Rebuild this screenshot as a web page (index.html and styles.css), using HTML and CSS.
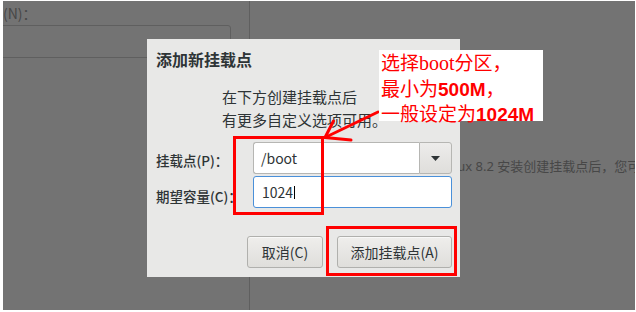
FILE: index.html
```html
<!DOCTYPE html>
<html lang="zh-CN">

<head>
    <meta charset="UTF-8">
    <title>添加新挂载点</title>
    <link rel="stylesheet" href="styles.css">
</head>

<body>
    <div class="page">
        <!-- dimmed installer window behind the dialog -->
        <div class="screen">
            <div class="left-pane">
                <div class="field-label">(N)：</div>
                <div class="name-box"></div>
            </div>
            <div class="right-pane">
                <p class="hint">Linux 8.2 安装创建挂载点后，您可在这里浏览它们的详细信息。</p>
            </div>
        </div>

        <div class="dialog">
            <h1 class="dialog-title">添加新挂载点</h1>
            <p class="dialog-desc">在下方创建挂载点后<br>有更多自定义选项可用。</p>
            <div class="form-grid">
                <label class="form-label label-mount">挂载点(P)：</label>
                <div class="combo">
                    <div class="combo-entry">/boot</div>
                    <div class="combo-button">
                        <svg width="9" height="5" viewBox="0 0 9 5">
                            <path d="M0 0 H9 L4.5 5 Z" fill="#2e3436" />
                        </svg>
                    </div>
                </div>
                <label class="form-label label-size">期望容量(C)：</label>
                <div class="entry">1024<span class="caret"></span></div>
            </div>
            <div class="dialog-actions">
                <button class="btn btn-cancel">取消(C)</button>
                <button class="btn btn-add">添加挂载点(A)</button>
            </div>
        </div>

        <!-- red annotations drawn on top of the screenshot -->
        <div class="mark mark-fields"></div>
        <div class="mark mark-button"></div>
        <svg class="arrow" width="636" height="312" viewBox="0 0 636 312">
            <g stroke="#ff0000" stroke-width="3" stroke-linecap="round" fill="none">
                <line x1="378" y1="112" x2="325" y2="137.5" />
                <line x1="325" y1="137.5" x2="333.5" y2="121" />
                <line x1="325" y1="137.5" x2="351" y2="140" />
            </g>
        </svg>
        <div class="note">
            <div>选择<span class="note-serif">boot</span>分区，</div>
            <div>最小为<b class="note-num">500M</b>，</div>
            <div>一般设定为<b class="note-num">1024M</b></div>
        </div>
    </div>
</body>

</html>
```

FILE: styles.css
```css
* {
    box-sizing: border-box;
    margin: 0;
    padding: 0;
}

body {
    background-color: #ffffff;
    font-family: "Noto Sans CJK SC", "Noto Sans", sans-serif;
    color: #2e3436;
}

.page {
    position: relative;
    width: 636px;
    height: 312px;
    overflow: hidden;
}

.screen {
    display: flex;
    height: 309px;
    margin: 1px 1px 2px 3px;
    background-color: #737373;
    color: #474747;
    font-size: 14px;
}

.left-pane {
    width: 247px;
    border-right: 1px solid #5f5f5f;
    overflow: hidden;
}

.field-label {
    line-height: 20px;
    padding-top: 2px;
}

.name-box {
    width: 234px;
    height: 33px;
    margin-top: 2px;
    margin-left: -6px;
    border: 1px solid #5f5f5f;
    border-radius: 3px;
}

.right-pane {
    flex: 1;
    overflow: hidden;
}

.hint {
    white-space: nowrap;
    font-family: "Noto Sans", "Noto Sans CJK SC", sans-serif;
    font-size: 13px;
    line-height: 20px;
    padding-top: 155px;
    padding-left: 189px;
}

/* dialog */

.dialog {
    position: absolute;
    left: 147px;
    top: 39px;
    width: 313px;
    height: 238px;
    background-color: #e8e8e7;
    padding: 9px 8px 9px 9px;
    display: flex;
    flex-direction: column;
}

.dialog-title {
    font-size: 16px;
    font-weight: 700;
    line-height: 22px;
}

.dialog-desc {
    margin-top: 15px;
    margin-left: 66px;
    font-size: 15px;
    line-height: 23px;
}

.form-grid {
    display: grid;
    grid-template-columns: 97px 199px;
    row-gap: 2px;
    margin-top: 11px;
}

.form-label {
    font-size: 13.5px;
    font-weight: 500;
    font-feature-settings: "halt";
    align-self: center;
    white-space: nowrap;
}

.label-mount {
    padding-top: 3px;
}

.label-size {
    padding-top: 7px;
}

.combo {
    display: flex;
    height: 32px;
}

.combo-entry {
    flex: 1;
    background-color: #ffffff;
    border: 1px solid #b6b6b3;
    border-right: none;
    border-radius: 3px 0 0 3px;
    padding-left: 7px;
    font-size: 14px;
    line-height: 30px;
}

.combo-button {
    width: 33px;
    display: flex;
    align-items: center;
    justify-content: center;
    border: 1px solid #b6b6b3;
    border-radius: 0 3px 3px 0;
    background: linear-gradient(#edeceb, #dfdedb);
}

.entry {
    height: 32px;
    background-color: #ffffff;
    border: 1px solid #4a90d9;
    border-radius: 3px;
    padding-left: 8px;
    font-size: 14px;
    line-height: 30px;
    display: flex;
    align-items: center;
}

.caret {
    width: 1px;
    height: 13px;
    margin-left: 1px;
    background-color: #000000;
}

.dialog-actions {
    display: flex;
    justify-content: flex-end;
    gap: 14px;
    margin-top: 28px;
}

.btn {
    height: 32px;
    border: 1px solid #b0b0ad;
    border-radius: 3px;
    background: linear-gradient(#efeeec, #dfdedb);
    box-shadow: inset 0 1px #f8f8f7;
    color: #2e3436;
    font-family: inherit;
    font-size: 14px;
}

.btn-cancel {
    width: 76px;
}

.btn-add {
    width: 115px;
}

/* annotations */

.mark {
    position: absolute;
    border: 3px solid #ff0000;
}

.mark-fields {
    left: 233px;
    top: 136px;
    width: 91px;
    height: 79px;
}

.mark-button {
    left: 326px;
    top: 226px;
    width: 131px;
    height: 50px;
}

.arrow {
    position: absolute;
    left: 0;
    top: 0;
}

.note {
    position: absolute;
    left: 379px;
    top: 50px;
    width: 164px;
    height: 71px;
    background-color: #ffffff;
    color: #ff0000;
    font-size: 19px;
    line-height: 23.5px;
    padding-left: 2px;
    white-space: nowrap;
}

.note-serif {
    font-family: "Liberation Serif", "Times New Roman", "DejaVu Serif", serif;
    font-size: 20px;
}

.note-num {
    font-family: "Liberation Sans", sans-serif;
    font-weight: 700;
    font-size: 19px;
}
```
